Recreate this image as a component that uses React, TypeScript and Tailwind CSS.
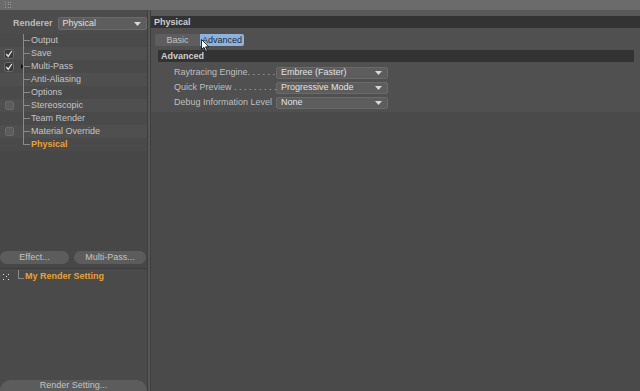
import React from "react";

const font = { fontFamily: '"Liberation Sans", Arial, sans-serif' };

function Check() {
  return (
    <svg width="10" height="10" viewBox="0 0 10 10">
      <rect x="0.5" y="0.5" width="9" height="9" rx="2" fill="#3a3a3a" stroke="#6a6a6a" />
      <path d="M2.3 5 L4.2 7.4 L7.8 2" stroke="#e6e6e6" strokeWidth="1.3" fill="none" />
    </svg>
  );
}

function Box() {
  return <div className="w-[9px] h-[9px] rounded-[2px] bg-[#5c5c5c] border border-[#6a6a6a]" />;
}

function Arrow() {
  return (
    <svg width="7" height="4" viewBox="0 0 7 4">
      <path d="M0 0 L7 0 L3.5 4 Z" fill="#d8d8d8" />
    </svg>
  );
}

const rows: { label: string; mark?: "check" | "box"; arrow?: boolean; active?: boolean }[] = [
  { label: "Output" },
  { label: "Save", mark: "check" },
  { label: "Multi-Pass", mark: "check", arrow: true },
  { label: "Anti-Aliasing" },
  { label: "Options" },
  { label: "Stereoscopic", mark: "box" },
  { label: "Team Render" },
  { label: "Material Override", mark: "box" },
  { label: "Physical", active: true },
];

function Dropdown({ text, w }: { text: string; w: string }) {
  return (
    <div className={`${w} h-[12px] rounded-[2px] bg-[#5d5d5d] border border-[#6a6a6a] flex items-center justify-between pl-[4px] pr-[5px]`}>
      <span className="text-[9px] leading-none text-[#e2e2e2]">{text}</span>
      <Arrow />
    </div>
  );
}

export default function App() {
  return (
    <div className="w-[640px] h-[391px] overflow-hidden bg-[#4a4a4a] flex flex-col" style={font}>
      {/* top strip */}
      <div className="h-[10px] bg-[#6b6b6b] flex items-center pl-[5px] shrink-0">
        <div className="w-[7px] h-[7px] grid grid-cols-3 gap-[1px]">
          {Array.from({ length: 9 }).map((_, i) => (
            <div key={i} className="w-[1px] h-[1px] bg-[#9a9a9a]" />
          ))}
        </div>
      </div>
      <div className="flex flex-1 min-h-0">
        {/* left panel */}
        <div className="w-[147px] flex flex-col bg-[#4a4a4a]">
          <div className="h-[24px] flex items-center pl-[13px] pt-[3px] bg-[#4c4c4c]">
            <span className="text-[9px] font-bold text-[#bdbdbd] mr-[5px]">Renderer</span>
            <div className="w-[92px] h-[13px] rounded-[2px] bg-[#5d5d5d] border border-[#6a6a6a] flex items-center justify-between pl-[4px] pr-[5px]">
              <span className="text-[9px] leading-none text-[#e0e0e0]">Physical</span>
              <Arrow />
            </div>
          </div>
          <div className="flex flex-col">
            {rows.map((r, i) => (
              <div
                key={r.label}
                className={`h-[13px] flex items-center relative ${i % 2 === 0 ? "bg-[#4a4a4a]" : "bg-[#4f4f4f]"}`}
              >
                <div className="w-[16px] flex items-center justify-center pl-[2px]">
                  {r.mark === "check" && <Check />}
                  {r.mark === "box" && <Box />}
                </div>
                <div className="w-[7px] relative h-full">
                  {r.arrow && (
                    <svg className="absolute left-[5px] top-[4px]" width="3" height="5" viewBox="0 0 3 5">
                      <path d="M0 0 L3 2.5 L0 5 Z" fill="#111" />
                    </svg>
                  )}
                </div>
                <div className="w-[8px] h-full relative">
                  <div className={`absolute left-0 top-0 w-[1px] bg-[#8a8a8a] ${i === rows.length - 1 ? "h-[7px]" : "h-full"}`} />
                  <div className="absolute left-0 top-[6px] w-[7px] h-[1px] bg-[#8a8a8a]" />
                </div>
                <span className={`text-[9px] leading-none ${r.active ? "text-[#e8a230] font-bold" : "text-[#c4c4c4]"}`}>
                  {r.label}
                </span>
              </div>
            ))}
          </div>
          <div className="flex-1 bg-[#474747]" />
          <div className="flex gap-[5px] px-0 pb-[4px] bg-[#474747]">
            <div className="w-[69px] h-[13px] rounded-full bg-[#5c5c5c] flex items-center justify-center text-[9px] text-[#c2c2c2]">
              Effect...
            </div>
            <div className="w-[72px] h-[13px] rounded-full bg-[#5c5c5c] flex items-center justify-center text-[9px] text-[#c2c2c2]">
              Multi-Pass...
            </div>
          </div>
          <div className="h-[1px] bg-[#3c3c3c]" />
          <div className="h-[111px] bg-[#4a4a4a] flex flex-col">
            <div className="h-[15px] flex items-center pl-[3px] pt-[1px]">
              <div className="w-[7px] h-[7px] grid grid-cols-3 gap-[1px] mr-[8px]">
                {[1, 0, 1, 0, 1, 0, 1, 0, 1].map((v, i) => (
                  <div key={i} className={`w-[1px] h-[1px] ${v ? "bg-[#e0e0e0]" : "bg-transparent"}`} />
                ))}
              </div>
              <div className="w-[6px] h-[9px] border-l border-b border-[#8a8a8a] -mt-[5px] mr-[1px]" />
              <span className="text-[9px] font-bold text-[#e8a230]">My Render Setting</span>
            </div>
          </div>
          <div className="h-[11px] rounded-t-full bg-[#5c5c5c] flex items-start justify-center pt-[1px] text-[9px] text-[#c2c2c2] leading-none">
            Render Setting...
          </div>
        </div>
        {/* divider */}
        <div className="w-[4px] flex">
          <div className="w-[1px] bg-[#3e3e3e]" />
          <div className="w-[2px] bg-[#575757]" />
          <div className="w-[1px] bg-[#3f3f3f]" />
        </div>
        {/* right panel */}
        <div className="flex-1 flex flex-col bg-[#4a4a4a]">
          <div className="h-[6px] bg-[#595959]" />
          <div className="h-[12px] bg-[#333333] flex items-center pl-[3px]">
            <span className="text-[9px] font-bold text-[#cfcfcf] leading-none">Physical</span>
          </div>
          <div className="bg-[#505050] flex flex-col pb-[3px]">
            <div className="flex pl-[4px] pt-[6px]">
              <div className="w-[45px] h-[12px] bg-[#5e5e5e] rounded-l-[2px] flex items-center justify-center text-[9px] text-[#c4c4c4] leading-none">
                Basic
              </div>
              <div className="w-[44px] h-[12px] bg-[#8fb2dc] rounded-r-[2px] flex items-center justify-center text-[9px] text-[#1e2a3a] leading-none relative">
                Advanced
                <svg className="absolute left-[1px] top-[5px]" width="9" height="14" viewBox="0 0 9 14">
                  <path d="M0.5 0.5 L0.5 10.5 L3 8.3 L4.8 12.5 L6.3 11.8 L4.6 7.8 L7.8 7.8 Z" fill="#fff" stroke="#000" strokeWidth="0.8" />
                </svg>
              </div>
            </div>
            <div className="ml-[7px] mr-[6px] mt-[4px] h-[12px] bg-[#333333] flex items-center pl-[3px]">
              <span className="text-[9px] font-bold text-[#cfcfcf] leading-none">Advanced</span>
            </div>
            <div className="flex flex-col gap-[2px] pt-[4px] pl-[23px]">
              {[
                ["Raytracing Engine. . . . . .", "Embree (Faster)"],
                ["Quick Preview . . . . . . . . .", "Progressive Mode"],
                ["Debug Information Level", "None"],
              ].map(([l, v]) => (
                <div key={l} className="flex items-center h-[13px]">
                  <span className="w-[102px] text-[9px] text-[#bfbfbf] leading-none whitespace-nowrap">{l}</span>
                  <Dropdown text={v} w="w-[112px]" />
                </div>
              ))}
            </div>
          </div>
          <div className="flex-1 bg-[#4a4a4a]" />
        </div>
      </div>
    </div>
  );
}
